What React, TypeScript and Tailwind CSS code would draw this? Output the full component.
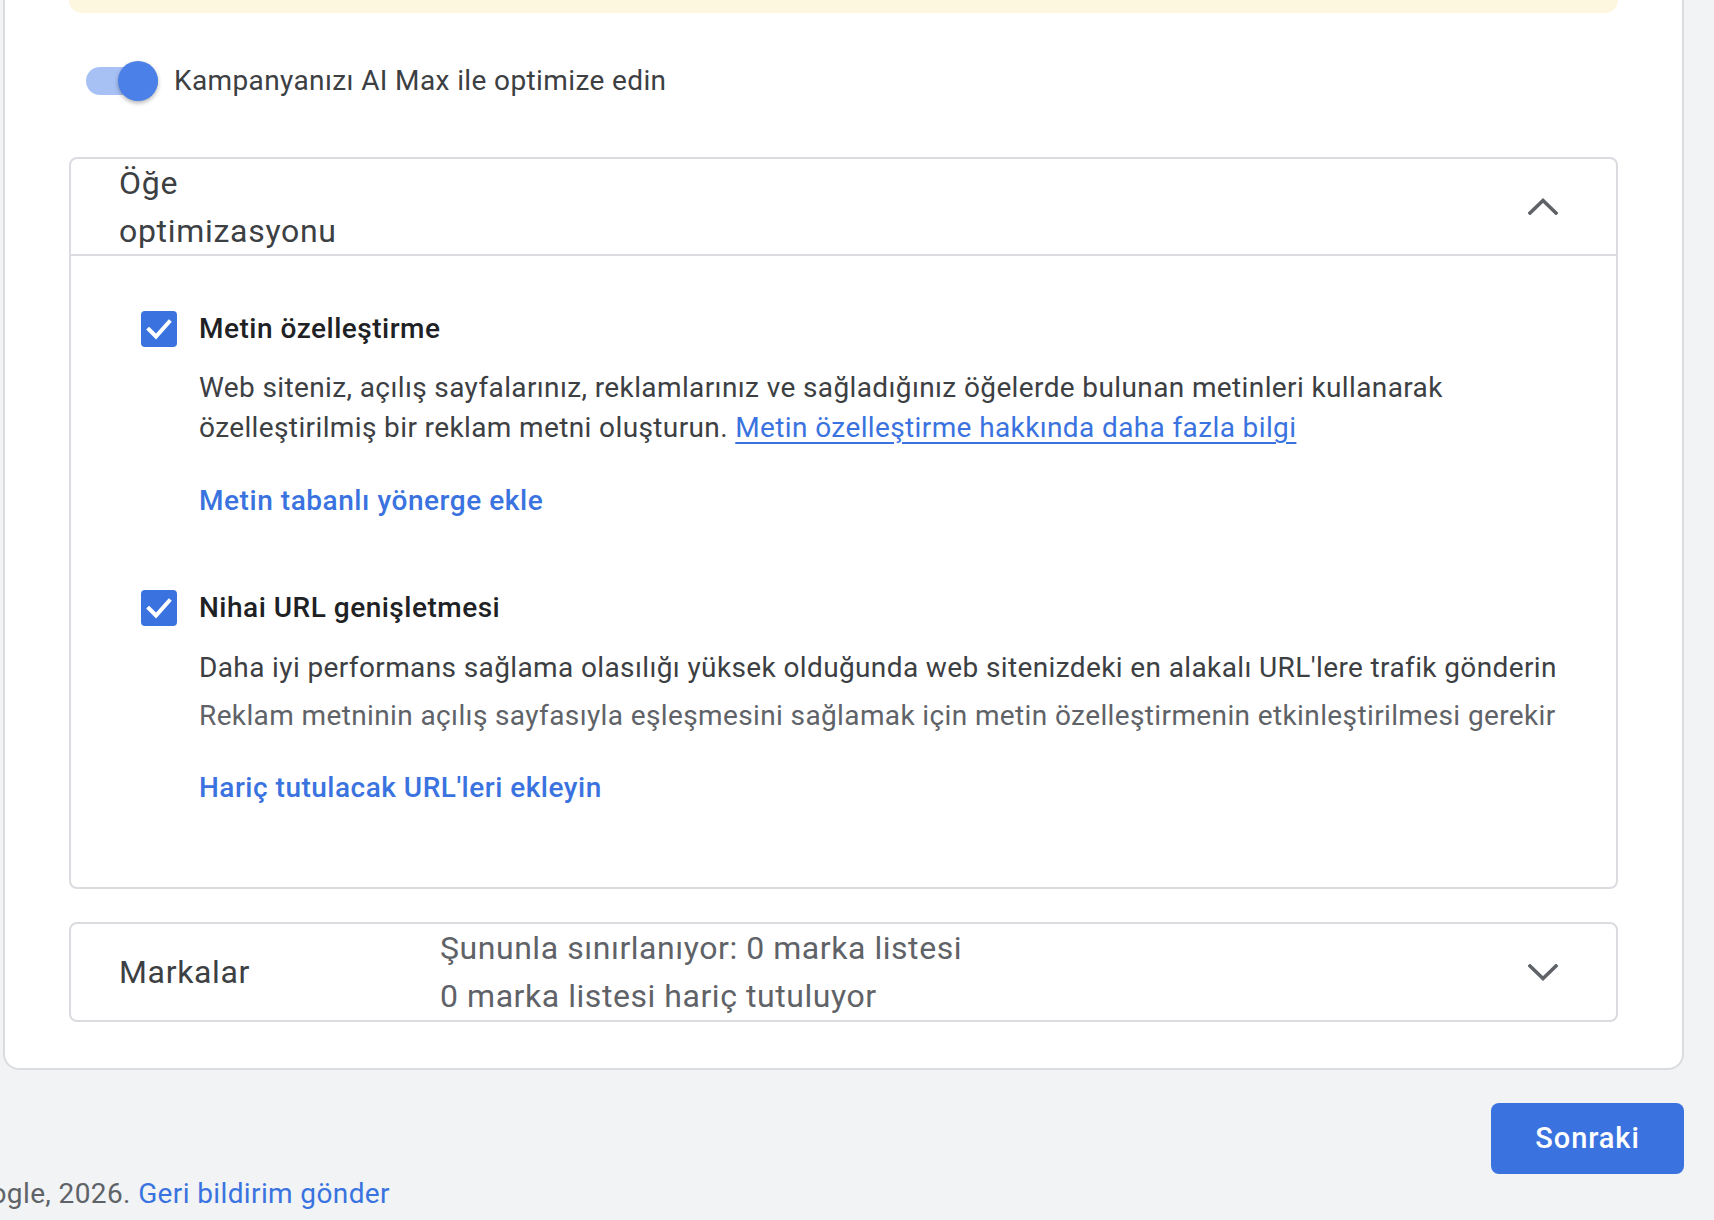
import React, { useState } from 'react';

const BLUE = '#3a73e0';

const Chevron = ({ up }: { up: boolean }) => (
  <svg width="30" height="17" viewBox="0 0 30 17" fill="none">
    <polyline
      points={up ? '2,15 15,2.5 28,15' : '2,2 15,14.5 28,2'}
      stroke="#5f6368"
      strokeWidth="3.6"
      strokeLinecap="square"
      strokeLinejoin="miter"
    />
  </svg>
);

const Checkbox = ({ checked, onToggle }: { checked: boolean; onToggle: () => void }) => (
  <button
    type="button"
    onClick={onToggle}
    className={`ml-[70px] flex h-[36px] w-[36px] shrink-0 items-center justify-center rounded-[4px] ${checked ? 'bg-[#3a73e0]' : 'border-[4px] border-[#5f6368] bg-white'}`}
  >
    {checked && (
      <svg width="26" height="22" viewBox="0 0 26 22" fill="none">
        <polyline points="3,11.5 10,18.5 23,4" stroke="white" strokeWidth="4" strokeLinecap="square" />
      </svg>
    )}
  </button>
);

const App: React.FC = () => {
  const [aiMax, setAiMax] = useState(true);
  const [textCustom, setTextCustom] = useState(true);
  const [urlExpand, setUrlExpand] = useState(true);
  const [open, setOpen] = useState(true);

  return (
    <div className="min-h-screen bg-[#f1f3f4] font-['Roboto',sans-serif] tracking-[0.38px] pl-[3px]">
      <div className="w-[1681px]">
        {/* main card */}
        <div className="rounded-b-[16px] border-x-2 border-b-2 border-[#dadce0] bg-white px-[64px] pb-[46px]">
          <div className="h-[13px] rounded-b-[16px] bg-[#fef7e0]"></div>

          {/* AI Max toggle */}
          <div className="mt-[48px] flex h-[40px] items-center pl-[17px]">
            <button
              type="button"
              onClick={() => setAiMax(!aiMax)}
              className={`relative h-[28px] w-[72px] rounded-full ${aiMax ? 'bg-[#a8c1f5]' : 'bg-[#bdc1c6]'}`}
            >
              <span
                className={`absolute top-[-6px] h-[40px] w-[40px] rounded-full shadow-[0_2px_4px_rgba(0,0,0,0.3)] ${aiMax ? 'right-0 bg-[#4a80e8]' : 'left-0 bg-white'}`}
              ></span>
            </button>
            <span className="ml-[16px] text-[28px] leading-[40px] text-[#3c4043]">Kampanyanızı AI Max ile optimize edin</span>
          </div>

          {/* Öğe optimizasyonu */}
          <div className="mt-[56px] rounded-[8px] border-2 border-[#dadce0]">
            <div
              className={`flex h-[97px] cursor-pointer items-center pl-[48px] pr-[49px] ${open ? 'border-b-2 border-[#dadce0]' : ''}`}
              onClick={() => setOpen(!open)}
            >
              <div className="w-[240px] text-[32px] leading-[48px] tracking-[0.7px] text-[#3c4043]">Öğe optimizasyonu</div>
              <div className="flex-1"></div>
              <div className="flex w-[48px] justify-center">
                <Chevron up={open} />
              </div>
            </div>

            {open && (
              <div className="pt-[53px] pb-[79px] pr-[40px]">
                <div className="flex h-[40px] items-center">
                  <Checkbox checked={textCustom} onToggle={() => setTextCustom(!textCustom)} />
                  <span className="ml-[22px] text-[28px] font-medium leading-[40px] tracking-[0.5px] text-[#202124]">Metin özelleştirme</span>
                </div>
                <div className="ml-[128px]">
                  <p className="mt-[19px] text-[28px] leading-[40px] text-[#3c4043]">
                    Web siteniz, açılış sayfalarınız, reklamlarınız ve sağladığınız öğelerde bulunan metinleri kullanarak
                    özelleştirilmiş bir reklam metni oluşturun.{' '}
                    <a href="#" className="text-[#3a73e0] underline underline-offset-[5px]">
                      Metin özelleştirme hakkında daha fazla bilgi
                    </a>
                  </p>
                  <a href="#" className="mt-[33px] block text-[28px] font-medium leading-[40px] tracking-[0.55px]" style={{ color: BLUE }}>
                    Metin tabanlı yönerge ekle
                  </a>
                </div>

                <div className="mt-[67px] flex h-[40px] items-center">
                  <Checkbox checked={urlExpand} onToggle={() => setUrlExpand(!urlExpand)} />
                  <span className="ml-[22px] text-[28px] font-medium leading-[40px] tracking-[0.5px] text-[#202124]">Nihai URL genişletmesi</span>
                </div>
                <div className="ml-[128px]">
                  <p className="mt-[20px] text-[28px] leading-[40px] text-[#3c4043]">
                    Daha iyi performans sağlama olasılığı yüksek olduğunda web sitenizdeki en alakalı URL'lere trafik gönderin
                  </p>
                  <p className="mt-[8px] text-[28px] leading-[40px] text-[#5f6368]">
                    Reklam metninin açılış sayfasıyla eşleşmesini sağlamak için metin özelleştirmenin etkinleştirilmesi gerekir
                  </p>
                  <a href="#" className="mt-[32px] block text-[28px] font-medium leading-[40px] tracking-[0.5px] text-[#3a73e0]">
                    Hariç tutulacak URL'leri ekleyin
                  </a>
                </div>
              </div>
            )}
          </div>

          {/* Markalar */}
          <div className="mt-[33px] rounded-[8px] border-2 border-[#dadce0]">
            <div className="flex h-[96px] cursor-pointer items-center pl-[48px] pr-[49px]">
              <div className="w-[321px] text-[32px] leading-[48px] tracking-[0.65px] text-[#3c4043]">Markalar</div>
              <div className="flex-1 text-[32px] leading-[48px] tracking-[0.55px] text-[#5f6368]">
                <div>Şununla sınırlanıyor: 0 marka listesi</div>
                <div>0 marka listesi hariç tutuluyor</div>
              </div>
              <div className="flex w-[48px] justify-center">
                <Chevron up={false} />
              </div>
            </div>
          </div>
        </div>

        {/* footer actions */}
        <div className="mt-[33px] flex justify-end">
          <button
            type="button"
            className="h-[71px] w-[193px] rounded-[8px] bg-[#3a73e0] text-[29px] font-medium tracking-[0.9px] text-white"
          >
            Sonraki
          </button>
        </div>
        <div className="ml-[-78px] whitespace-nowrap text-[28px] leading-[40px] text-[#5f6368]">
          © Google, 2026.{' '}
          <a href="#" className="text-[#3a73e0]">
            Geri bildirim gönder
          </a>
        </div>
      </div>
    </div>
  );
};

export default App;
